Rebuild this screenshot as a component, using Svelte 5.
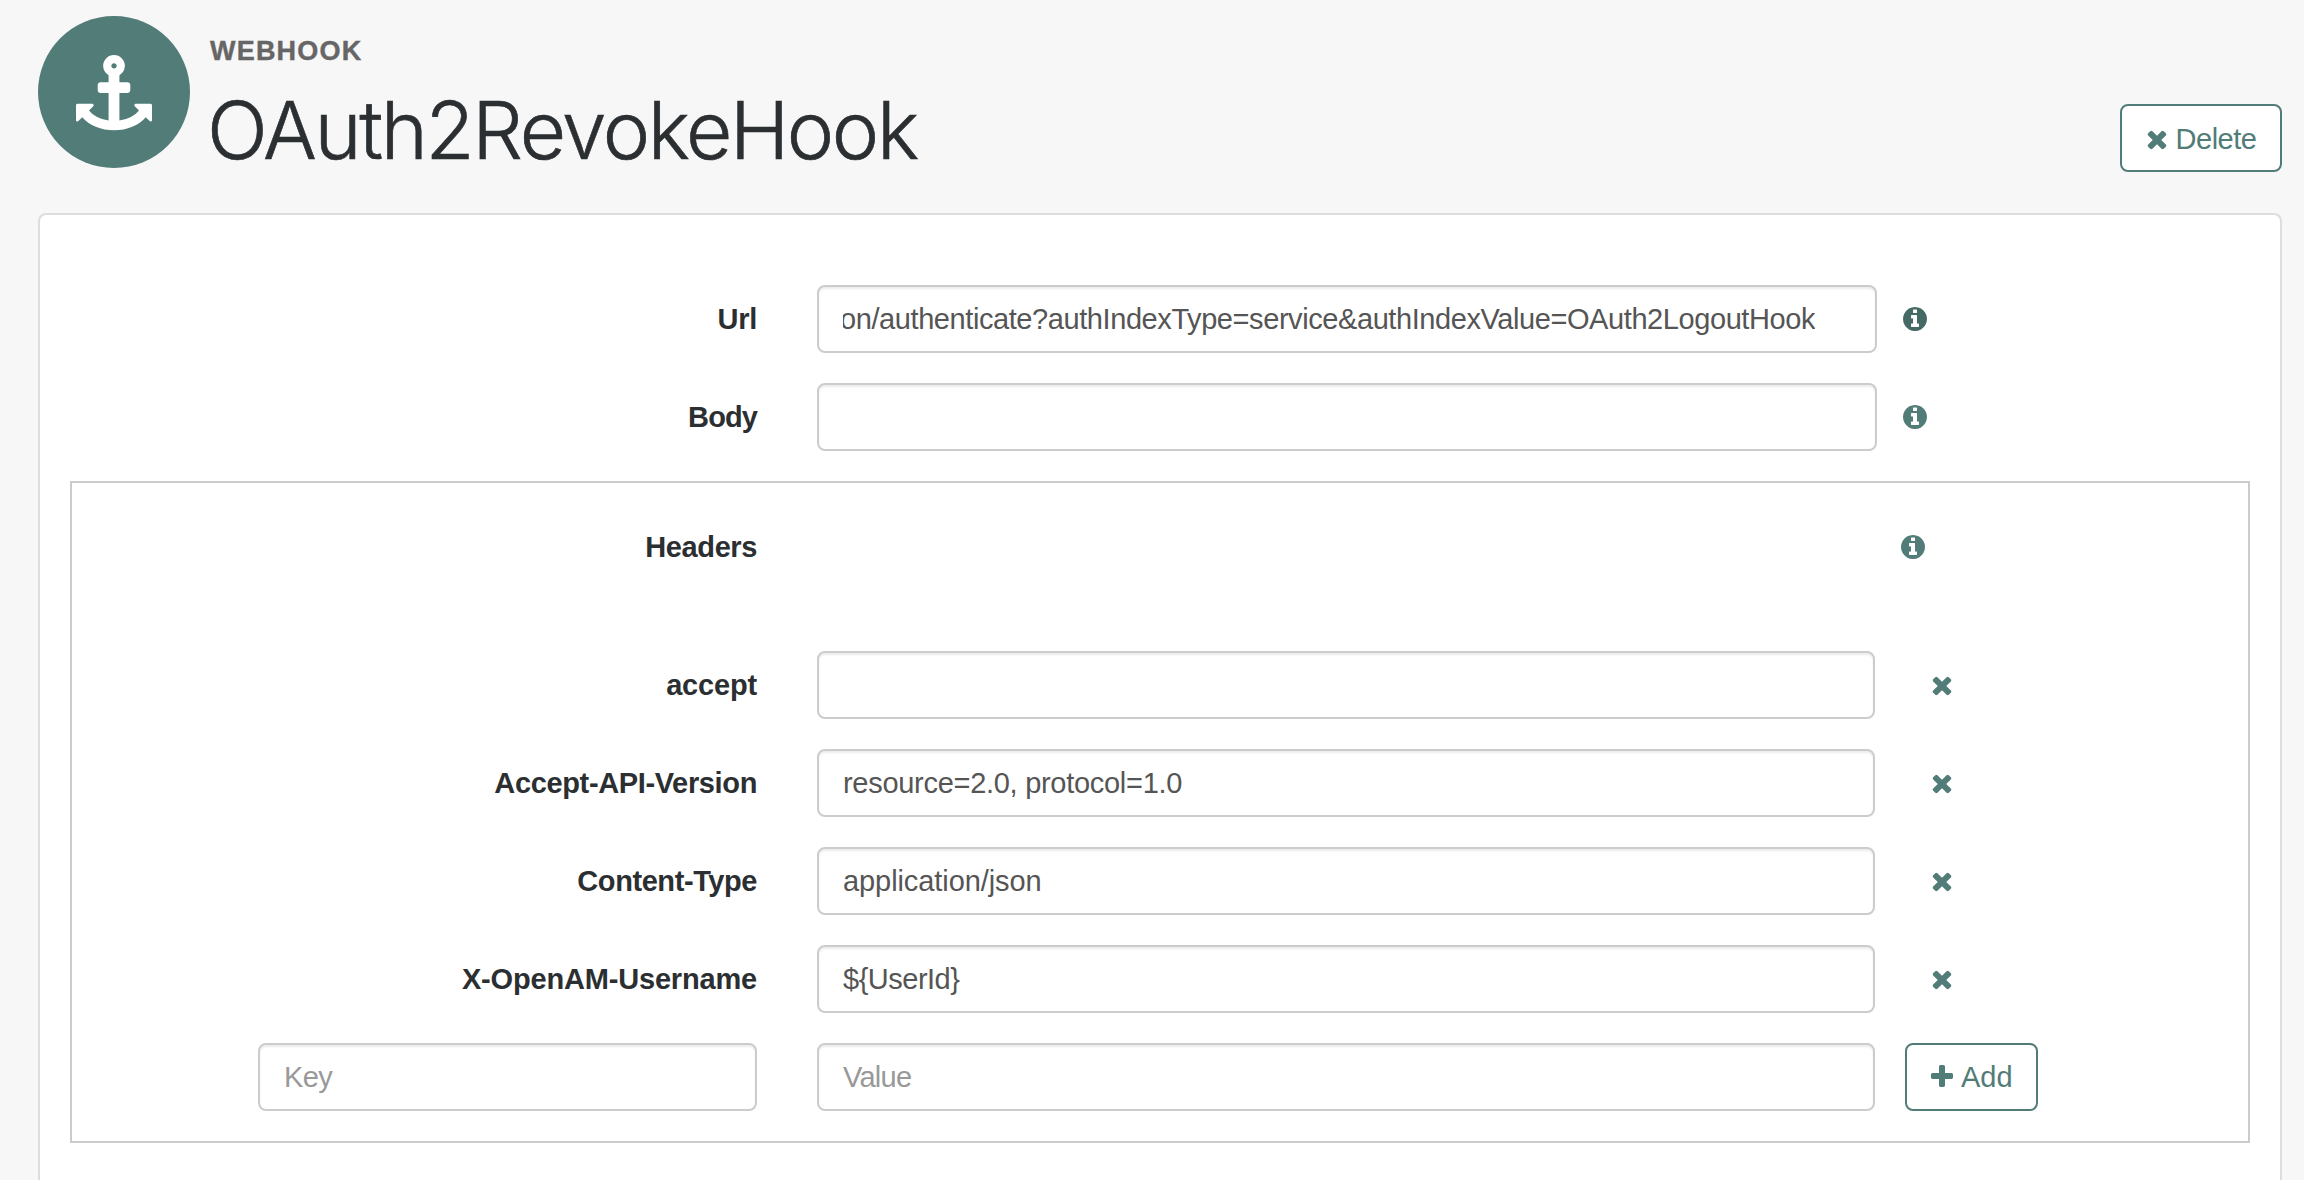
<script>
  const fields = [
    { label: 'Url', value: 'on/authenticate?authIndexType=service&authIndexValue=OAuth2LogoutHook', labelTrack: -0.3, track: -0.42, scrolled: true, hover: true },
    { label: 'Body', value: '', labelTrack: -0.9, track: 0 },
  ];
  const headers = [
    { label: 'accept', value: '', labelTrack: -0.17, track: 0 },
    { label: 'Accept-API-Version', value: 'resource=2.0, protocol=1.0', labelTrack: -0.36, track: -0.29 },
    { label: 'Content-Type', value: 'application/json', labelTrack: -0.42, track: -0.08 },
    { label: 'X-OpenAM-Username', value: '${UserId}', labelTrack: -0.18, track: -0.5 },
  ];
</script>

{#snippet times()}
  <svg class="glyph" viewBox="192 0 1408 1792" aria-hidden="true"><path d="M1490 1322q0 40-28 68l-136 136q-28 28-68 28t-68-28l-294-294-294 294q-28 28-68 28t-68-28l-136-136q-28-28-28-68t28-68l294-294-294-294q-28-28-28-68t28-68l136-136q28-28 68-28t68 28l294 294 294-294q28-28 68-28t68 28l136 136q28 28 28 68t-28 68l-294 294 294 294q28 28 28 68z" /></svg>
{/snippet}

{#snippet info(hover)}
  <svg class="info" class:hover viewBox="128 128 1536 1536" aria-hidden="true"><path d="M1152 1376v-160q0-14-9-23t-23-9h-96v-512q0-14-9-23t-23-9h-320q-14 0-23 9t-9 23v160q0 14 9 23t23 9h96v320h-96q-14 0-23 9t-9 23v160q0 14 9 23t23 9h448q14 0 23-9t9-23zm-128-896v-160q0-14-9-23t-23-9h-192q-14 0-23 9t-9 23v160q0 14 9 23t23 9h192q14 0 23-9t9-23zm640 416q0 209-103 385.5t-279.5 279.5-385.5 103-385.5-103-279.5-279.5-103-385.5 103-385.5 279.5-279.5 385.5-103 385.5 103 279.5 279.5 103 385.5z" /></svg>
{/snippet}

<div class="page">
  <header>
    <div class="badge">
      <svg viewBox="0 0 1792 1792" aria-hidden="true"><path d="M960 256q0-26-19-45t-45-19-45 19-19 45 19 45 45 19 45-19 19-45zm832 928v352q0 22-20 30-8 2-12 2-12 0-23-9l-93-93q-119 143-318.5 226.5t-429.5 83.5-429.5-83.5-318.5-226.5l-93 93q-9 9-23 9-4 0-12-2-20-8-20-30v-352q0-14 9-23t23-9h352q22 0 30 20 8 19-7 35l-100 100q67 91 189.5 153.5t271.5 82.5v-647h-192q-26 0-45-19t-19-45v-128q0-26 19-45t45-19h192v-163q-58-34-93-92.5t-35-128.5q0-106 75-181t181-75 181 75 75 181q0 70-35 128.5t-93 92.5v163h192q26 0 45 19t19 45v128q0 26-19 45t-45 19h-192v647q149-20 271.5-82.5t189.5-153.5l-100-100q-15-16-7-35 8-20 30-20h352q14 0 23 9t9 23z" /></svg>
    </div>
    <div class="heading">
      <div class="kind">WEBHOOK</div>
      <h1>OAuth2RevokeHook</h1>
    </div>
    <button class="btn delete">{@render times()}<span>Delete</span></button>
  </header>

  <main class="panel">
    {#each fields as f}
      <div class="row">
        <span class="label" style:letter-spacing="{f.labelTrack}px">{f.label}</span>
        <div class="input" class:scrolled={f.scrolled}>
          <span class="clip"><span style:letter-spacing="{f.track}px">{f.value}</span></span>
        </div>
        {@render info(f.hover)}
      </div>
    {/each}

    <section class="group">
      <div class="row title">
        <span class="label headers">Headers</span>
        <span></span>
        {@render info(false)}
      </div>
      {#each headers as h}
        <div class="row">
          <span class="label" style:letter-spacing="{h.labelTrack}px">{h.label}</span>
          <div class="input">
            <span class="clip"><span style:letter-spacing="{h.track}px">{h.value}</span></span>
          </div>
          <button class="remove" aria-label="Remove">{@render times()}</button>
        </div>
      {/each}
      <div class="row">
        <div class="input key"><span class="clip">Key</span></div>
        <div class="input value"><span class="clip">Value</span></div>
        <button class="btn add">
          <svg class="glyph" viewBox="192 0 1408 1792" aria-hidden="true"><path d="M1600 736v192q0 40-28 68t-68 28h-416v416q0 40-28 68t-68 28h-192q-40 0-68-28t-28-68v-416h-416q-40 0-68-28t-28-68v-192q0-40 28-68t68-28h416v-416q0-40 28-68t68-28h192q40 0 68 28t28 68v416h416q40 0 68 28t28 68z" /></svg><span>Add</span>
        </button>
      </div>
    </section>
  </main>
</div>

<style>
  :global(body) {
    background: #f7f7f7;
    overflow: hidden;
  }
  .page {
    box-sizing: border-box;
    height: 1180px;
    padding: 0 22px 0 38px;
    overflow: hidden;
    display: flex;
    flex-direction: column;
    font: 29px/40px 'Liberation Sans', Arial, sans-serif;
    color: #2b2f32;
  }
  header {
    display: flex;
    align-items: flex-start;
    height: 197px;
    padding-top: 16px;
  }
  .badge {
    width: 152px;
    height: 152px;
    border-radius: 50%;
    background: #527c77;
    display: flex;
    justify-content: center;
    padding-top: 39px;
    box-sizing: border-box;
    flex: none;
  }
  .badge svg {
    width: 76px;
    height: 76px;
    fill: #fff;
  }
  .heading {
    margin-left: 20px;
    flex: 1;
  }
  .kind {
    margin-top: 15px;
    height: 40px;
    font-size: 27px;
    font-weight: 700;
    letter-spacing: 1.2px;
    color: #666;
    -webkit-text-stroke: 0.4px #666;
  }
  h1 {
    margin: 10px 0 0 -3px;
    font: 300 80px/98px Inter, 'Helvetica Neue', sans-serif;
    letter-spacing: -2.35px;
    -webkit-text-stroke: 0.6px #2b2f32;
    white-space: nowrap;
  }
  .btn {
    box-sizing: border-box;
    height: 68px;
    border: 2px solid #527c77;
    border-radius: 8px;
    background: #fff;
    color: #527c77;
    font: inherit;
    line-height: 40px;
    padding: 0 0 0 24px;
    display: flex;
    align-items: center;
  }
  .btn span {
    white-space: nowrap;
  }
  .glyph {
    width: 22px;
    height: 28px;
    fill: #527c77;
    flex: none;
  }
  .delete {
    width: 162px;
    margin-top: 88px;
    letter-spacing: -0.5px;
  }
  .delete span {
    margin: 2px 0 0 7.6px;
  }
  .delete :global(svg) {
    margin-top: 1px;
  }
  .add {
    width: 133px;
  }
  .add span {
    margin-left: 8px;
  }
  .panel {
    flex: 1;
    box-sizing: border-box;
    background: #fff;
    border: 2px solid #ddd;
    border-bottom: 0;
    border-radius: 8px 8px 0 0;
    padding: 70px 30px 0;
    display: flex;
    flex-direction: column;
    gap: 30px;
  }
  .row {
    display: grid;
    grid-template-columns: 687px 1060px 1fr;
    align-items: center;
    height: 68px;
    flex: none;
  }
  .label {
    text-align: right;
    font-weight: 700;
  }
  .headers {
    letter-spacing: -0.4px;
  }
  .row > :nth-child(2) {
    margin-left: 60px;
    margin-right: -60px;
  }
  .row > :nth-child(3) {
    margin-left: 86px;
  }
  .input {
    box-sizing: border-box;
    height: 68px;
    padding: 0 24px;
    border: 2px solid #ccc;
    border-radius: 8px;
    background: #fff;
    box-shadow: inset 0 2px 2px rgba(0, 0, 0, 0.075);
    display: flex;
    align-items: center;
    color: #555;
  }
  .clip {
    flex: 1;
    min-width: 0;
    display: flex;
    overflow: hidden;
    white-space: nowrap;
  }
  .scrolled {
    padding-right: 60px;
  }
  .scrolled .clip {
    justify-content: flex-end;
  }
  .info {
    width: 24px;
    height: 24px;
    fill: #527c77;
  }
  .info.hover {
    fill: #456a66;
  }
  .group {
    border: 2px solid #ccc;
    padding: 30px 0;
    display: flex;
    flex-direction: column;
    gap: 30px;
  }
  .group .row {
    grid-template-columns: 685px 1058px 1fr;
  }
  .group .title {
    margin-bottom: 40px;
  }
  .remove {
    padding: 0 0 0 30px;
    border: 0;
    background: none;
    display: flex;
    justify-self: start;
  }
  .row > .add:nth-child(3) {
    margin-left: 90px;
  }
  .key {
    margin-left: 186px;
    color: #999;
    letter-spacing: -0.6px;
  }
  .value {
    color: #999;
    letter-spacing: -0.75px;
  }
</style>
